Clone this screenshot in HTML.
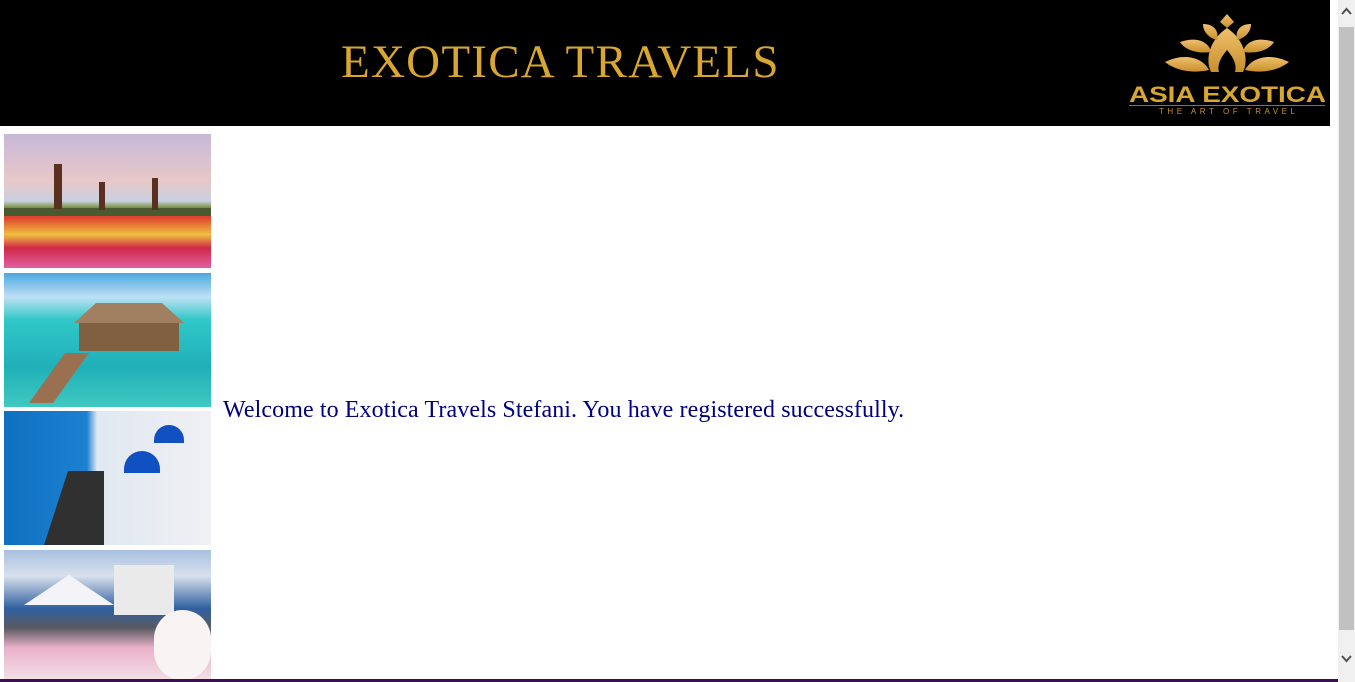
<!DOCTYPE html>
<html><head><meta charset="utf-8"><style>
html,body{margin:0;padding:0;width:1355px;height:682px;overflow:hidden;background:#fff;position:relative;font-family:"Liberation Serif",serif}
.hdr{position:absolute;left:0;top:0;width:1330px;height:126px;background:#000}
.title{position:absolute;left:341px;top:36px;font-size:47px;color:#d9a630;letter-spacing:1.25px;line-height:52px}
.img{position:absolute;left:4px;width:207px;overflow:hidden}
.msg{position:absolute;left:223px;top:397px;font-size:24px;color:#000080;white-space:nowrap;letter-spacing:0.1px}
.sb{position:absolute;left:1330px;top:0;width:25px;height:682px;background:#fff}
.track{position:absolute;left:1338px;top:0;width:17px;height:682px;background:#f0f0f0}
.thumb{position:absolute;left:1339px;top:27px;width:15px;height:603px;background:#c1c1c1}
.bot{position:absolute;left:0;top:679px;width:1338px;height:3px;background:#3a1050}
</style></head><body>
<div class="hdr">
 <div class="title">EXOTICA TRAVELS</div>
 <svg style="position:absolute;left:1125px;top:10px" width="205" height="108" viewBox="0 0 205 108">
  <defs><linearGradient id="g" x1="0" y1="0" x2="0" y2="1"><stop offset="0" stop-color="#f0c070"/><stop offset="1" stop-color="#c8902a"/></linearGradient></defs>
  <g fill="url(#g)">
   <path d="M102 4 l7 8 -7 6 -7-6z"/>
   <path d="M102 18 C120 30 124 50 118 62 L86 62 C80 50 84 30 102 18z"/>
   <path d="M102 40 C95 48 92 56 94 62 L110 62 C112 56 109 48 102 40z" fill="#000"/>
   <path d="M78 14 C90 14 94 22 92 30 C84 28 78 22 78 14z"/>
   <path d="M126 14 C114 14 110 22 112 30 C120 28 126 22 126 14z"/>
   <path d="M55 32 C72 26 84 32 86 42 C72 44 60 40 55 32z"/>
   <path d="M149 32 C132 26 120 32 118 42 C132 44 144 40 149 32z"/>
   <path d="M40 52 C60 42 78 48 84 60 C66 64 50 60 40 52z"/>
   <path d="M164 52 C144 42 126 48 120 60 C138 64 154 60 164 52z"/>
  </g>
  <text x="4" y="92" textLength="197" lengthAdjust="spacingAndGlyphs" font-family="Liberation Sans,sans-serif" font-weight="bold" font-size="22" fill="#d9a630">ASIA EXOTICA</text>
  <rect x="4" y="95" width="196" height="1" fill="#9a7020"/>
  <text x="34" y="104" textLength="136" lengthAdjust="spacing" font-family="Liberation Sans,sans-serif" font-size="8" fill="#c89030">THE ART OF TRAVEL</text>
 </svg>
</div>
<div class="img" style="top:134px;height:134px;background:linear-gradient(#c7b8d8 0%,#e8c8c8 35%,#c8d0e0 50%,#7a9040 55%,#e04030 62%,#f0c040 75%,#d02848 85%,#e060a0 100%)">
 <div style="position:absolute;left:0;top:74px;width:207px;height:8px;background:#4a5a30"></div>
 <div style="position:absolute;left:50px;top:30px;width:8px;height:45px;background:#5a3020"></div>
 <div style="position:absolute;left:95px;top:48px;width:6px;height:28px;background:#5a3020"></div>
 <div style="position:absolute;left:148px;top:44px;width:6px;height:32px;background:#5a3020"></div>
</div>
<div class="img" style="top:273px;height:134px;background:linear-gradient(#4aa8e0 0%,#bfe0f4 18%,#30c8c8 35%,#20b0b8 70%,#40c8c0 100%)">
 <div style="position:absolute;left:70px;top:30px;width:110px;height:20px;background:#a08060;clip-path:polygon(20% 0,80% 0,100% 100%,0 100%)"></div>
 <div style="position:absolute;left:75px;top:50px;width:100px;height:28px;background:#806040"></div>
 <div style="position:absolute;left:25px;top:80px;width:60px;height:50px;background:#9a7050;clip-path:polygon(60% 0,100% 0,40% 100%,0 100%)"></div>
</div>
<div class="img" style="top:411px;height:134px;background:linear-gradient(90deg,#1070c0 0%,#1c80d0 40%,#e0e8f0 45%,#f0f0f4 100%)">
 <div style="position:absolute;left:150px;top:14px;width:30px;height:18px;border-radius:15px 15px 0 0;background:#1050c0"></div>
 <div style="position:absolute;left:120px;top:40px;width:36px;height:22px;border-radius:18px 18px 0 0;background:#1050c0"></div>
 <div style="position:absolute;left:40px;top:60px;width:60px;height:74px;background:#303030;clip-path:polygon(40% 0,100% 0,100% 100%,0 100%)"></div>
</div>
<div class="img" style="top:550px;height:130px;background:linear-gradient(#a8c0e0 0%,#d8e0ec 20%,#3060a0 45%,#5a5a60 60%,#e8b0c8 75%,#f4e0e8 100%)">
 <div style="position:absolute;left:20px;top:25px;width:90px;height:30px;background:#f4f4f8;clip-path:polygon(50% 0,100% 100%,0 100%)"></div>
 <div style="position:absolute;left:110px;top:15px;width:60px;height:50px;background:#eaeaea"></div>
 <div style="position:absolute;left:150px;top:60px;width:57px;height:70px;border-radius:30px;background:#f8f4f4"></div>
</div>
<div class="msg">Welcome to Exotica Travels Stefani. You have registered successfully.</div>
<div class="sb"></div>
<div class="track"></div>
<div class="thumb"></div>
<svg style="position:absolute;left:1340px;top:6px" width="13" height="10"><path d="M2 8 L6.5 3 L11 8" stroke="#505050" stroke-width="2" fill="none"/></svg>
<svg style="position:absolute;left:1340px;top:654px" width="13" height="10"><path d="M2 2 L6.5 7 L11 2" stroke="#505050" stroke-width="2" fill="none"/></svg>
<div class="bot"></div>
</body></html>
